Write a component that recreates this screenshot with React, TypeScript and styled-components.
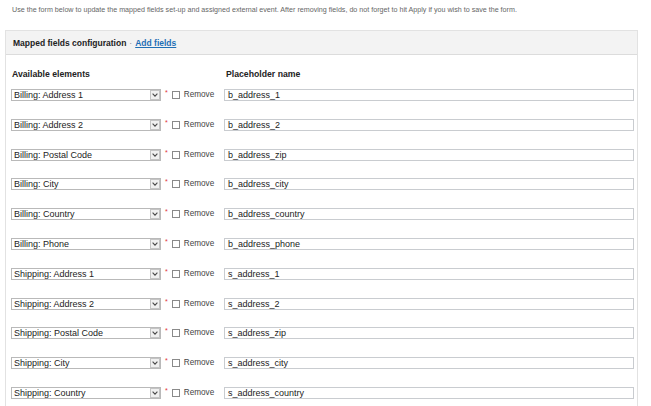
import { Fragment } from 'react';
import styled, { createGlobalStyle } from 'styled-components';

const GlobalStyle = createGlobalStyle`
  html, body {
    margin: 0;
    padding: 0;
    background: #ffffff;
  }
  body {
    font-family: "Liberation Sans", Arial, sans-serif;
    color: #333;
  }
`;

const Page = styled.div`
  width: 651px;
  height: 406px;
  overflow: hidden;
  padding: 6px 0 0 5px;
  box-sizing: border-box;
`;

const Intro = styled.p`
  margin: 0 0 0 7px;
  font-size: 7.15px;
  line-height: 8px;
  color: #666;
  white-space: nowrap;
`;

const Panel = styled.div`
  margin-top: 16px;
  width: 633px;
  border: 1px solid #e2e2e2;
  border-bottom: none;
  box-sizing: border-box;
`;

const PanelHeader = styled.div`
  height: 23px;
  display: flex;
  align-items: center;
  padding-left: 7px;
  background: #f3f3f3;
  border-bottom: 1px solid #dcdcdc;
  font-size: 8.5px;
  font-weight: bold;
  color: #222;
`;

const Dot = styled.span`
  margin: 0 3px;
  font-weight: normal;
  color: #7a8a9a;
`;

const AddLink = styled.a`
  color: #1f6fb5;
  text-decoration: underline;
  cursor: pointer;
`;

const PanelBody = styled.div`
  padding: 13px 0 0 5px;
  display: grid;
  grid-template-columns: 213px 410px;
  grid-template-rows: 21px;
  grid-auto-rows: 29.8px;
`;

const ColumnTitle = styled.div<{ $indent?: number }>`
  font-size: 8.7px;
  font-weight: bold;
  color: #222;
  padding-left: ${p => p.$indent ?? 1}px;
  padding-top: 1px;
`;

const Cell = styled.div`
  display: flex;
  align-items: flex-start;
`;

const SelectBox = styled.div`
  width: 150px;
  height: 12px;
  border: 1px solid #b9b9b9;
  box-sizing: border-box;
  display: flex;
  align-items: center;
  justify-content: space-between;
  background: #fff;
  color: #222;
`;

const SelectText = styled.span`
  padding-left: 2px;
  font-size: 9px;
  line-height: 10px;
`;

const ArrowButton = styled.span`
  width: 10px;
  height: 10px;
  margin-right: 0;
  border: 1px solid #c4c4c4;
  box-sizing: border-box;
  background: #f0f0f0;
  display: flex;
  align-items: center;
  justify-content: center;
`;

const Required = styled.span`
  color: #e0353a;
  font-size: 7px;
  margin: 0 4px;
  line-height: 7px;
`;

const CheckBox = styled.span`
  width: 8px;
  height: 8px;
  border: 1px solid #8a8a8a;
  box-sizing: border-box;
  margin-top: 2px;
  background: #fff;
`;

const RemoveLabel = styled.span`
  margin-left: 4px;
  font-size: 8.2px;
  line-height: 12px;
  color: #444;
`;

const TextInput = styled.div`
  width: 410px;
  height: 12px;
  border: 1px solid #c9ccd0;
  box-sizing: border-box;
  padding-left: 3px;
  font-size: 9px;
  line-height: 10px;
  color: #222;
  background: #fff;
`;

const rows: [string, string][] = [
  ['Billing: Address 1', 'b_address_1'],
  ['Billing: Address 2', 'b_address_2'],
  ['Billing: Postal Code', 'b_address_zip'],
  ['Billing: City', 'b_address_city'],
  ['Billing: Country', 'b_address_country'],
  ['Billing: Phone', 'b_address_phone'],
  ['Shipping: Address 1', 's_address_1'],
  ['Shipping: Address 2', 's_address_2'],
  ['Shipping: Postal Code', 's_address_zip'],
  ['Shipping: City', 's_address_city'],
  ['Shipping: Country', 's_address_country'],
];

const Chevron = () => (
  <svg width="6" height="4" viewBox="0 0 6 4">
    <path d="M0.6 0.6 L3 3.2 L5.4 0.6" fill="none" stroke="#4a4a4a" strokeWidth="1.1" />
  </svg>
);

export default function App() {
  return (
    <>
      <GlobalStyle />
      <Page>
        <Intro>
          Use the form below to update the mapped fields set-up and assigned external event. After removing fields, do not forget to hit Apply if you wish to save the form.
        </Intro>
        <Panel>
          <PanelHeader>
            Mapped fields configuration<Dot>·</Dot>
            <AddLink>Add fields</AddLink>
          </PanelHeader>
          <PanelBody>
            <ColumnTitle>Available elements</ColumnTitle>
            <ColumnTitle $indent={2}>Placeholder name</ColumnTitle>
            {rows.map(([element, name]) => (
              <Fragment key={element}>
                <Cell>
                  <SelectBox>
                    <SelectText>{element}</SelectText>
                    <ArrowButton>
                      <Chevron />
                    </ArrowButton>
                  </SelectBox>
                  <Required>*</Required>
                  <CheckBox />
                  <RemoveLabel>Remove</RemoveLabel>
                </Cell>
                <Cell>
                  <TextInput>{name}</TextInput>
                </Cell>
              </Fragment>
            ))}
          </PanelBody>
        </Panel>
      </Page>
    </>
  );
}
